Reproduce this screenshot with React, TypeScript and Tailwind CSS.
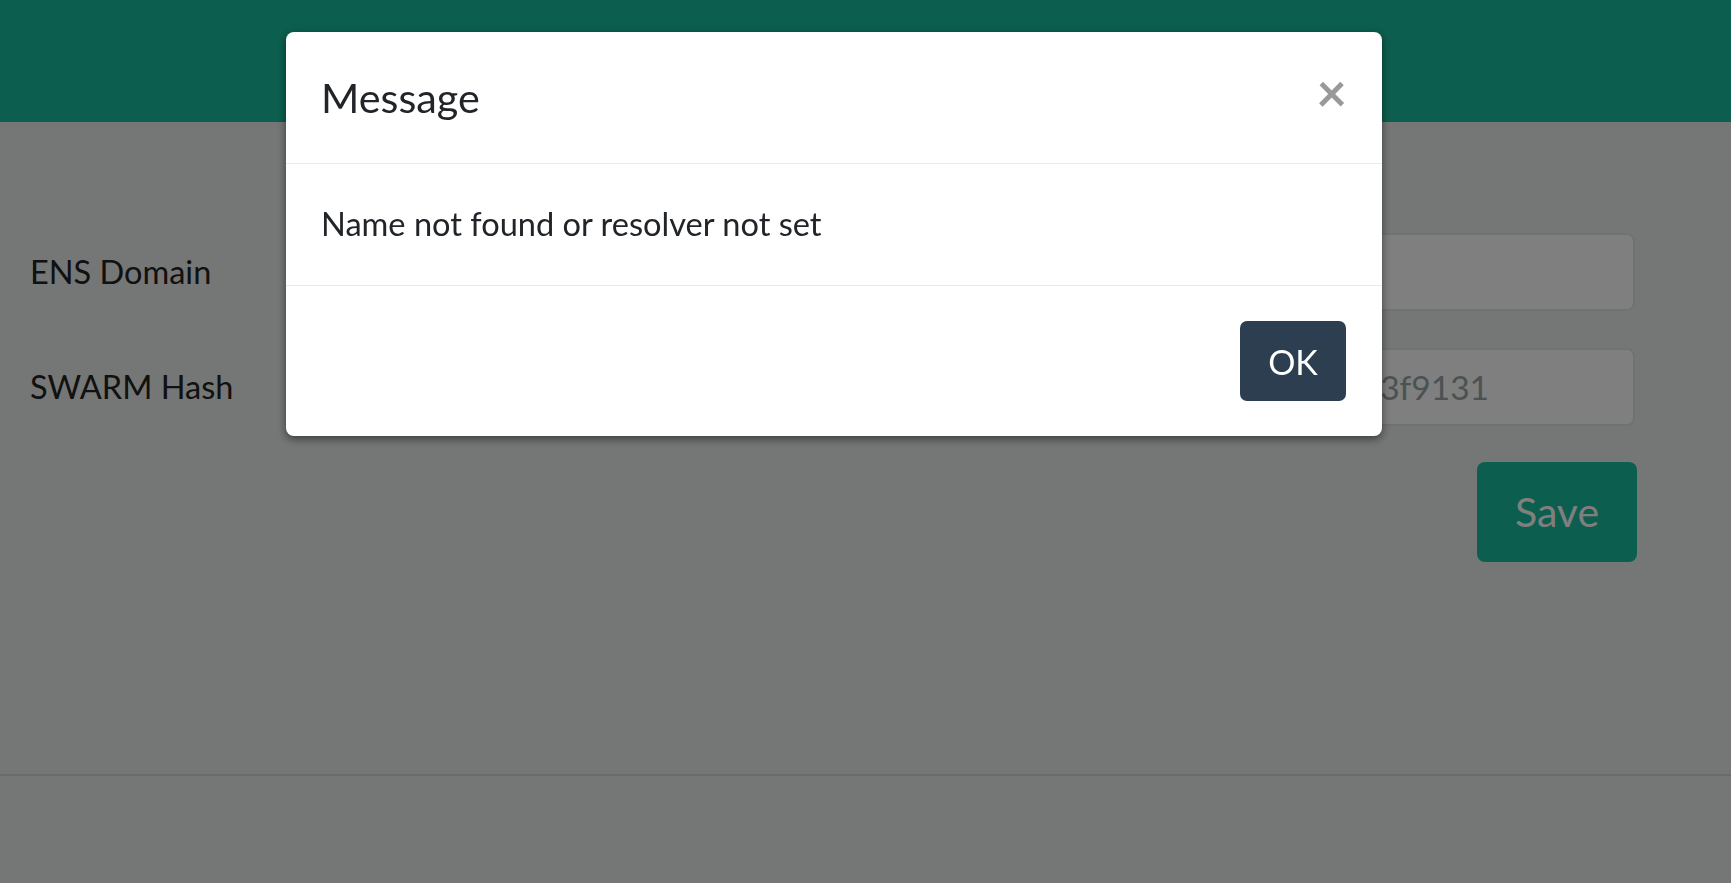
import React from 'react';

const HASH_PLACEHOLDER = 'a4c1e7b2d9f05c83e6b1a9d47f2c0e5b8d3a6f19c4e7b0d2a5f8c1e4b73f9131';

function Field({ label, placeholder }: { label: string; placeholder?: string }) {
  return (
    <div className="grid grid-cols-[275px_1fr] items-center">
      <label className="text-[32.5px] text-[#222]">{label}</label>
      <input
        className="h-[78px] w-full rounded-[8px] border-2 border-[#dce4ec] bg-white px-[20px] text-[33.5px] text-[#2c3e50] outline-none placeholder:text-[#95a5a6]"
        placeholder={placeholder}
      />
    </div>
  );
}

function MessageModal() {
  return (
    <div className="fixed inset-0 z-10 bg-black/50">
      <div className="absolute left-[286px] top-[32px] w-[1096px] overflow-hidden rounded-[8px] bg-white shadow-[0_3px_8px_rgba(0,0,0,0.5)]">
        {/* Header */}
        <div className="flex h-[132px] items-center justify-between border-b border-[#e9ecef] pl-[35px] pr-[35px]">
          <h4 className="text-[41.3px] text-[#212529]">Message</h4>
          <button className="mb-[13px] text-[53px] font-bold leading-none text-[#999]">×</button>
        </div>
        {/* Body */}
        <div className="flex h-[122px] items-center border-b border-[#e9ecef] px-[35px]">
          <p className="text-[32.6px] text-[#212529]">Name not found or resolver not set</p>
        </div>
        {/* Footer */}
        <div className="flex h-[150px] items-center justify-end pr-[36px]">
          <button className="h-[80px] w-[106px] rounded-[7px] bg-[#2c3e50] text-[34px] text-white">OK</button>
        </div>
      </div>
    </div>
  );
}

export default function App() {
  return (
    <div className="relative min-h-screen bg-[#e9eeeb] text-[#2c3e50] [font-family:Lato,'Open_Sans',sans-serif]">
      <nav className="h-[122px] bg-[#18bc9c]" />

      <main className="pl-[30px] pr-[96px] pt-[111px]">
        <form className="flex flex-col gap-[37px]">
          <Field label="ENS Domain" />
          <Field label="SWARM Hash" placeholder={HASH_PLACEHOLDER} />
          <div className="-mt-px flex justify-end">
            <button
              type="button"
              className="mr-[-2px] h-[100px] w-[160px] rounded-[8px] bg-[#18bc9c] text-[41px] text-white"
            >
              Save
            </button>
          </div>
        </form>
      </main>

      <hr className="mt-[212px] border-t-2 border-[#d3d9d5]" />

      <MessageModal />
    </div>
  );
}
